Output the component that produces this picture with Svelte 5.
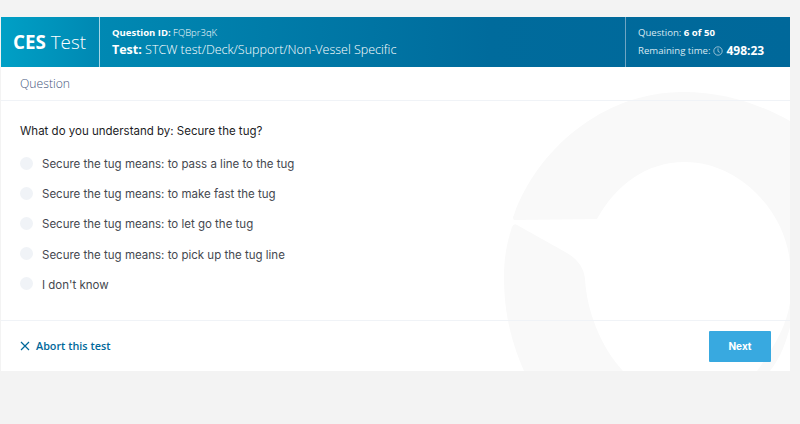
<script>
	const answers = [
		'Secure the tug means: to pass a line to the tug',
		'Secure the tug means: to make fast the tug',
		'Secure the tug means: to let go the tug',
		'Secure the tug means: to pick up the tug line',
		"I don't know"
	]
</script>

<div class="page">
	<main class="card">
		<svg class="mark" viewBox="0 0 789 354" aria-hidden="true">
			<path d="M513 203 Q511 201 513 198 C535 135 600 75 682 75 C725 75 760 88 789 104 L789 245 C783 190 735 145 684 145 C645 145 615 168 596 202 Z" fill="#f9f9f9" />
			<path d="M789 286 C785 310 773 330 756 354 L769 354 C780 340 785 325 789 310 Z" fill="#f9f9f9" />
			<path d="M511 210 Q513 206 516 208 L566 236 C578 243 583 252 584 262 C586 295 600 330 622 354 L523 354 C508 320 503 290 503 260 C503 240 506 225 511 210 Z" fill="#f9f9f9" />
		</svg>

		<header class="head">
			<div class="logo"><b>CES</b> Test</div>
			<div class="info">
				<div class="qid"><b>Question ID:</b> FQBpr3qK</div>
				<div class="test"><b>Test:</b> STCW test/Deck/Support/Non-Vessel Specific</div>
			</div>
			<div class="status">
				<div class="count">Question: <b>6 of 50</b></div>
				<div class="time">
					Remaining time:
					<svg class="clock" viewBox="0 0 10 10" aria-hidden="true">
						<circle cx="5" cy="5" r="4.2" />
						<path d="M5 2.4V5.4L6.8 6.4" />
					</svg>
					<b>498:23</b>
				</div>
			</div>
		</header>

		<div class="subhead">Question</div>

		<section class="body">
			<p class="question">What do you understand by: Secure the tug?</p>
			<ul>
				{#each answers as a}
					<li><span class="radio"></span>{a}</li>
				{/each}
			</ul>
		</section>

		<footer>
			<span class="abort">
				<svg viewBox="0 0 10 10" aria-hidden="true"><path d="M1 1L9 9M9 1L1 9" /></svg>
				Abort this test
			</span>
			<button type="button">Next</button>
		</footer>
	</main>
</div>

<style>
	:global(body) {
		background: #f3f3f3;
	}
	.page {
		height: 424px;
		padding: 17px 10px 0 1px;
		box-sizing: border-box;
		overflow: hidden;
	}
	.card {
		position: relative;
		height: 354px;
		background: #fff;
		display: flex;
		flex-direction: column;
		overflow: hidden;
	}
	.mark {
		position: absolute;
		left: 0;
		top: 0;
		width: 789px;
		height: 354px;
	}
	.head {
		position: relative;
		height: 50px;
		flex: none;
		display: flex;
		color: #fff;
		font-family: "Open Sans", sans-serif;
		font-weight: 300;
		background: linear-gradient(90deg, #00a0c6 0%, #0089b3 12%, #006b9c 62%, #00689a 100%);
	}
	.head b {
		font-weight: 700;
	}
	.logo {
		flex: none;
		width: 99px;
		box-sizing: border-box;
		padding-left: 12px;
		line-height: 50px;
		font-size: 18.8px;
		border-right: 1px solid #a5d6e6;
		white-space: nowrap;
	}
	.info {
		flex: 1;
		padding: 9px 0 0 12px;
	}
	.qid {
		font-size: 9.5px;
		line-height: 13px;
	}
	.test {
		font-size: 12.5px;
		line-height: 18px;
		margin-top: 2px;
	}
	.status {
		flex: none;
		width: 165px;
		box-sizing: border-box;
		padding: 9px 0 0 12px;
		border-left: 1px solid #6fa5c3;
		font-size: 9.6px;
		color: #d8e8f1;
		font-weight: 400;
	}
	.status b {
		color: #fff;
	}
	.count {
		line-height: 13px;
	}
	.time {
		display: flex;
		align-items: center;
		gap: 3px;
		margin-top: 3px;
		line-height: 18px;
		white-space: nowrap;
	}
	.time b {
		font-size: 12px;
	}
	.clock {
		width: 10px;
		height: 10px;
		fill: none;
		stroke: #b9d3e2;
		stroke-width: 0.8;
	}
	.subhead {
		position: relative;
		flex: none;
		height: 34px;
		box-sizing: border-box;
		padding-left: 19px;
		line-height: 33px;
		font-family: "Open Sans", sans-serif;
		font-weight: 300;
		font-size: 12.2px;
		color: #44557c;
		border-bottom: 1px solid #f0f3f7;
	}
	.body {
		position: relative;
		flex: 1;
		padding: 23px 19px 0;
		font-family: Inter, sans-serif;
		font-size: 11.5px;
	}
	.question {
		margin: 0 0 11px;
		line-height: 14px;
		color: #1d1d1f;
	}
	ul {
		list-style: none;
		margin: 0;
		padding: 0;
	}
	li {
		display: flex;
		align-items: center;
		height: 30.2px;
		color: #45484f;
	}
	.radio {
		width: 13px;
		height: 13px;
		border-radius: 50%;
		background: #f0f3f7;
		margin-right: 9px;
		position: relative;
		top: -1px;
	}
	footer {
		position: relative;
		height: 51px;
		flex: none;
		box-sizing: border-box;
		border-top: 1px solid #f0f3f7;
		display: flex;
		align-items: flex-start;
		justify-content: space-between;
		padding: 10px 19px 0;
		font-family: "Open Sans", sans-serif;
	}
	.abort {
		display: flex;
		align-items: center;
		gap: 6px;
		height: 29px;
		color: #00689a;
		font-size: 10.8px;
		font-weight: 600;
	}
	.abort svg {
		width: 10px;
		height: 10px;
		fill: none;
		stroke: #00689a;
		stroke-width: 1.2;
	}
	button {
		width: 62px;
		height: 31px;
		border: none;
		border-radius: 1px;
		padding: 0 0 2px;
		background: #38a9e0;
		color: #fff;
		font-family: Inter, sans-serif;
		font-size: 10px;
		font-weight: 700;
	}
</style>
